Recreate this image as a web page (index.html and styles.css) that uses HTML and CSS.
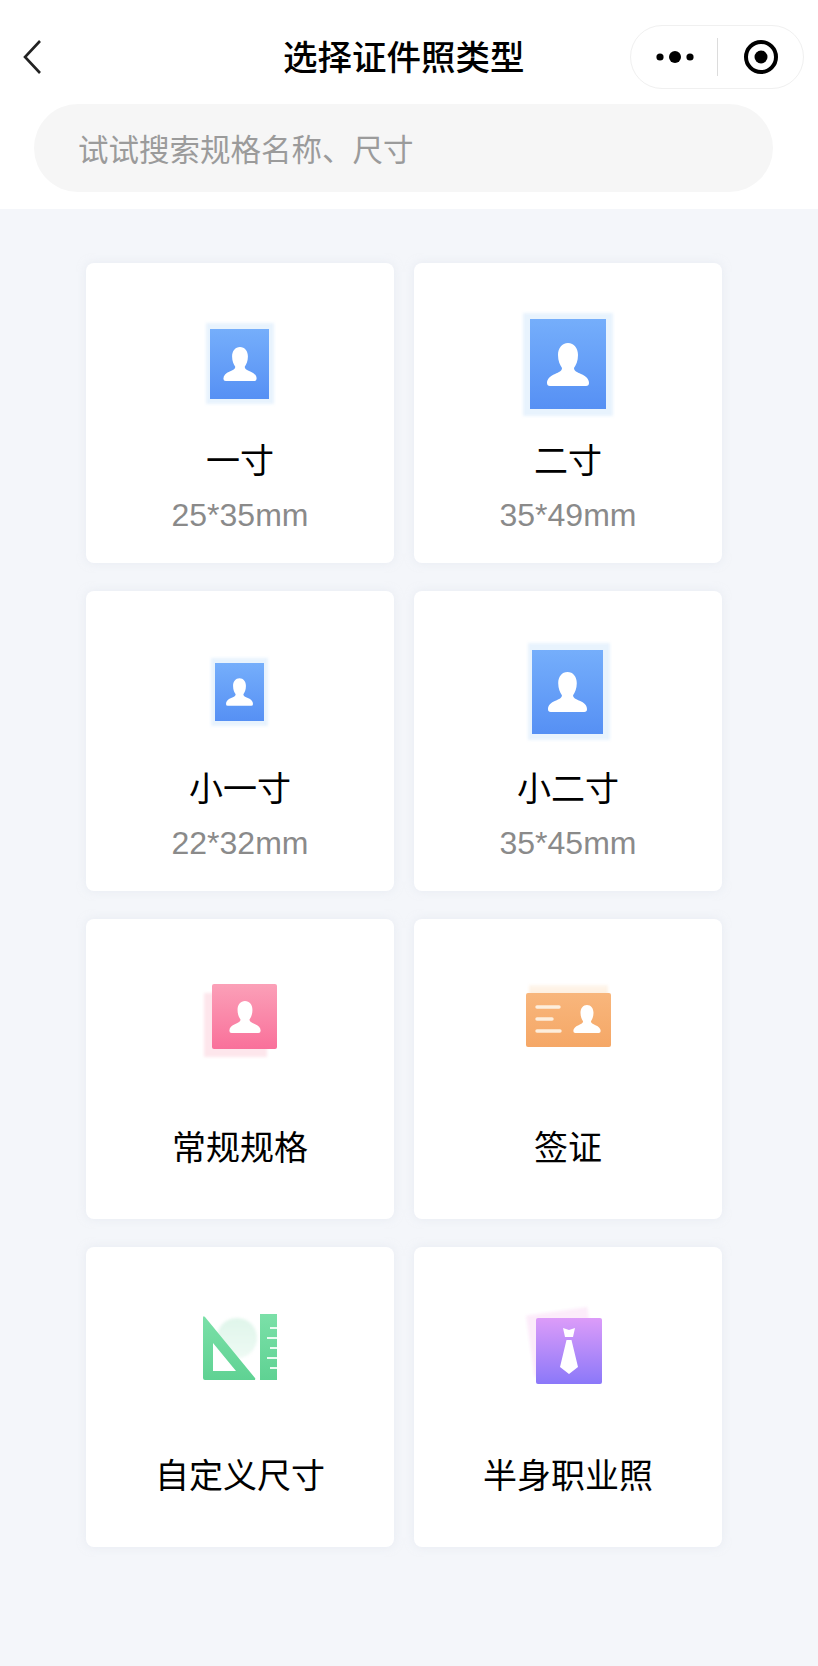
FILE: index.html
```html
<!DOCTYPE html>
<html lang="zh-CN">
<head>
    <meta charset="UTF-8">
    <meta name="viewport" content="width=device-width, initial-scale=1.0">
    <title>选择证件照类型</title>
    <link rel="stylesheet" href="styles.css">
</head>
<body>
<svg class="defs" width="0" height="0">
    <defs>
        <symbol id="person" viewBox="0 0 42 43">
            <path fill="#fff" d="M21 0C27 0 31 5 31 12C31 18 29 22 27 25C27 28 30 29 34 31C39 33 42 36 42 40Q42 43 39 43H3Q0 43 0 40C0 36 3 33 8 31C12 29 15 28 15 25C13 22 11 18 11 12C11 5 15 0 21 0Z"/>
        </symbol>
        <linearGradient id="blue" x1="0" y1="0" x2="0" y2="1">
            <stop offset="0" stop-color="#75aefb"/>
            <stop offset="1" stop-color="#5690f4"/>
        </linearGradient>
        <linearGradient id="pink" x1="0" y1="0" x2="0" y2="1">
            <stop offset="0" stop-color="#fba0b8"/>
            <stop offset="1" stop-color="#f9709a"/>
        </linearGradient>
        <linearGradient id="orange" x1="0" y1="0" x2="0" y2="1">
            <stop offset="0" stop-color="#f8b67c"/>
            <stop offset="1" stop-color="#f5a766"/>
        </linearGradient>
        <linearGradient id="green" x1="0" y1="0" x2="0" y2="1">
            <stop offset="0" stop-color="#7be0a8"/>
            <stop offset="1" stop-color="#5fd293"/>
        </linearGradient>
        <linearGradient id="purple" x1="0" y1="0" x2="0" y2="1">
            <stop offset="0" stop-color="#dc9cf9"/>
            <stop offset="1" stop-color="#8b78f9"/>
        </linearGradient>
        <linearGradient id="circle-fade" x1="0" y1="0" x2="0" y2="1">
            <stop offset="0" stop-color="#dff5ea"/>
            <stop offset="1" stop-color="#eefaf4"/>
        </linearGradient>
        <linearGradient id="orange-back" x1="0" y1="0" x2="0" y2="1">
            <stop offset="0" stop-color="#fef6ec"/>
            <stop offset="1" stop-color="#fce6cf"/>
        </linearGradient>
    </defs>
</svg>

<!-- Top bar and search -->
<header class="top">
    <div class="nav">
        <svg class="back" width="20" height="36" viewBox="0 0 20 36">
            <path d="M18 2L3 18L18 34" fill="none" stroke="#222" stroke-width="2.6"/>
        </svg>
        <div class="nav-title">选择证件照类型</div>
        <div class="capsule">
            <svg class="dots" width="38" height="14" viewBox="0 0 38 14">
                <circle cx="4" cy="7" r="3.6"/>
                <circle cx="19" cy="7" r="6"/>
                <circle cx="34" cy="7" r="3.6"/>
            </svg>
            <span class="capsule-line"></span>
            <svg class="target" width="36" height="36" viewBox="0 0 36 36">
                <circle cx="18" cy="18" r="15" fill="none" stroke="#000" stroke-width="4"/>
                <circle cx="18" cy="18" r="6.5"/>
            </svg>
        </div>
    </div>
    <div class="search">试试搜索规格名称、尺寸</div>
</header>

<!-- Photo types -->
<main class="type-grid">
    <div class="type-card">
        <svg class="type-icon" viewBox="0 0 130 130">
            <rect class="halo" x="31" y="24" width="68" height="81" fill="#e8f3fd"/>
            <rect x="35" y="30" width="59" height="70" fill="url(#blue)"/>
            <use href="#person" x="48" y="48" width="34" height="34"/>
        </svg>
        <div class="type-name">一寸</div>
        <div class="type-size">25*35mm</div>
    </div>
    <div class="type-card">
        <svg class="type-icon" viewBox="0 0 130 130">
            <rect class="halo" x="20" y="14" width="90" height="103" fill="#e8f3fd"/>
            <rect x="27" y="20" width="76" height="90" fill="url(#blue)"/>
            <use href="#person" x="44" y="44" width="42" height="43"/>
        </svg>
        <div class="type-name">二寸</div>
        <div class="type-size">35*49mm</div>
    </div>
    <div class="type-card">
        <svg class="type-icon" viewBox="0 0 130 130">
            <rect class="halo" x="36" y="31" width="57" height="68" fill="#e8f3fd"/>
            <rect x="40" y="36" width="49" height="58" fill="url(#blue)"/>
            <use href="#person" x="51" y="51" width="27" height="28"/>
        </svg>
        <div class="type-name">小一寸</div>
        <div class="type-size">22*32mm</div>
    </div>
    <div class="type-card">
        <svg class="type-icon" viewBox="0 0 130 130">
            <rect class="halo" x="25" y="16" width="82" height="97" fill="#e8f3fd"/>
            <rect x="29" y="23" width="71" height="84" fill="url(#blue)"/>
            <use href="#person" x="45" y="45" width="39" height="40"/>
        </svg>
        <div class="type-name">小二寸</div>
        <div class="type-size">35*45mm</div>
    </div>
    <div class="type-card">
        <svg class="type-icon" viewBox="0 0 130 130">
            <rect class="halo" x="29" y="38" width="63" height="64" fill="#fde6ec"/>
            <rect x="37" y="29" width="65" height="65" rx="2" fill="url(#pink)"/>
            <use href="#person" x="54" y="46" width="32" height="32"/>
        </svg>
        <div class="type-name type-name-only">常规规格</div>
    </div>
    <div class="type-card">
        <svg class="type-icon" viewBox="0 0 130 130">
            <rect class="halo" x="26" y="30" width="79" height="20" fill="url(#orange-back)"/>
            <rect x="23" y="38" width="85" height="54" rx="2" fill="url(#orange)"/>
            <g stroke="#fdeedd" stroke-width="3.4" stroke-linecap="round">
                <path d="M34 52H56"/>
                <path d="M34 64H49"/>
                <path d="M34 76H57"/>
            </g>
            <use href="#person" x="70" y="50" width="28" height="28"/>
        </svg>
        <div class="type-name type-name-only">签证</div>
    </div>
    <div class="type-card">
        <svg class="type-icon" viewBox="0 0 130 130">
            <circle class="halo" cx="62" cy="55" r="20" fill="url(#circle-fade)"/>
            <path fill="url(#green)" fill-rule="evenodd" d="M28 35V95Q28 97 30 97H79Q81 97 80 95L30 34Q28 32 28 35ZM38 60V88H61Z"/>
            <rect x="85" y="31" width="17" height="66" fill="url(#green)"/>
            <g stroke="#e9faf1" stroke-width="2">
                <path d="M95 45H102"/>
                <path d="M92 55H102"/>
                <path d="M95 65H102"/>
                <path d="M92 75H102"/>
                <path d="M95 85H102"/>
            </g>
        </svg>
        <div class="type-name type-name-only">自定义尺寸</div>
    </div>
    <div class="type-card">
        <svg class="type-icon" viewBox="0 0 130 130">
            <rect class="halo" x="27" y="28" width="62" height="62" fill="#fcecfa" transform="rotate(-8 58 59)"/>
            <rect x="33" y="35" width="66" height="66" rx="2" fill="url(#purple)"/>
            <path fill="#fff" d="M60 45L66 47L72 45L70 54H62ZM63.5 57H68.5L75 84L66 91L57 84Z"/>
        </svg>
        <div class="type-name type-name-only">半身职业照</div>
    </div>
</main>
</body>
</html>
```

FILE: styles.css
```css
body {
    margin: 0;
    min-height: 1666px;
    background-color: #f4f6fa;
    font-family: "Noto Sans CJK SC", "Liberation Sans", sans-serif;
    color: #000;
}

.defs {
    display: block;
    height: 0;
}

.top {
    background-color: #fff;
    padding: 25px 0 17px;
}

.nav {
    display: flex;
    align-items: center;
    padding: 0 14px 0 22px;
    height: 64px;
}

.back {
    flex: none;
    margin-top: -1px;
}

.nav-title {
    margin: -4px 0 0 241px;
    font-size: 34.5px;
    line-height: 44px;
    font-weight: 500;
    white-space: nowrap;
}

.capsule {
    display: flex;
    align-items: center;
    box-sizing: border-box;
    width: 174px;
    height: 64px;
    margin-left: auto;
    padding-left: 25px;
    background-color: #fff;
    border: 1px solid #f0f0f0;
    border-radius: 32px;
}

.dots {
    flex: none;
}

.capsule-line {
    width: 1px;
    height: 38px;
    margin-left: 23px;
    background-color: #dcdcdc;
}

.target {
    flex: none;
    margin-left: 25px;
}

.search {
    box-sizing: border-box;
    width: 739px;
    height: 88px;
    margin: 15px 0 0 34px;
    padding-left: 44px;
    background-color: #f6f6f6;
    border-radius: 44px;
    color: #9b9b9b;
    font-size: 30.5px;
    line-height: 88px;
}

.type-grid {
    display: grid;
    grid-template-columns: 308px 308px;
    gap: 28px 20px;
    padding: 54px 0 0 86px;
}

.type-card {
    box-sizing: border-box;
    height: 300px;
    background-color: #fff;
    border-radius: 8px;
    box-shadow: 0 0 8px rgba(220, 225, 235, 0.5);
    text-align: center;
}

.type-icon {
    display: block;
    width: 130px;
    height: 130px;
    margin: 36px auto 10px;
    overflow: visible;
}

.halo {
    filter: blur(1.5px);
}

.type-name {
    font-size: 34px;
    line-height: 40px;
}

.type-name-only {
    margin-top: 41px;
}

.type-size {
    margin-top: 16px;
    font-family: "Liberation Sans", Arial, sans-serif;
    font-size: 32px;
    line-height: 40px;
    color: #8a8a8a;
}
```
